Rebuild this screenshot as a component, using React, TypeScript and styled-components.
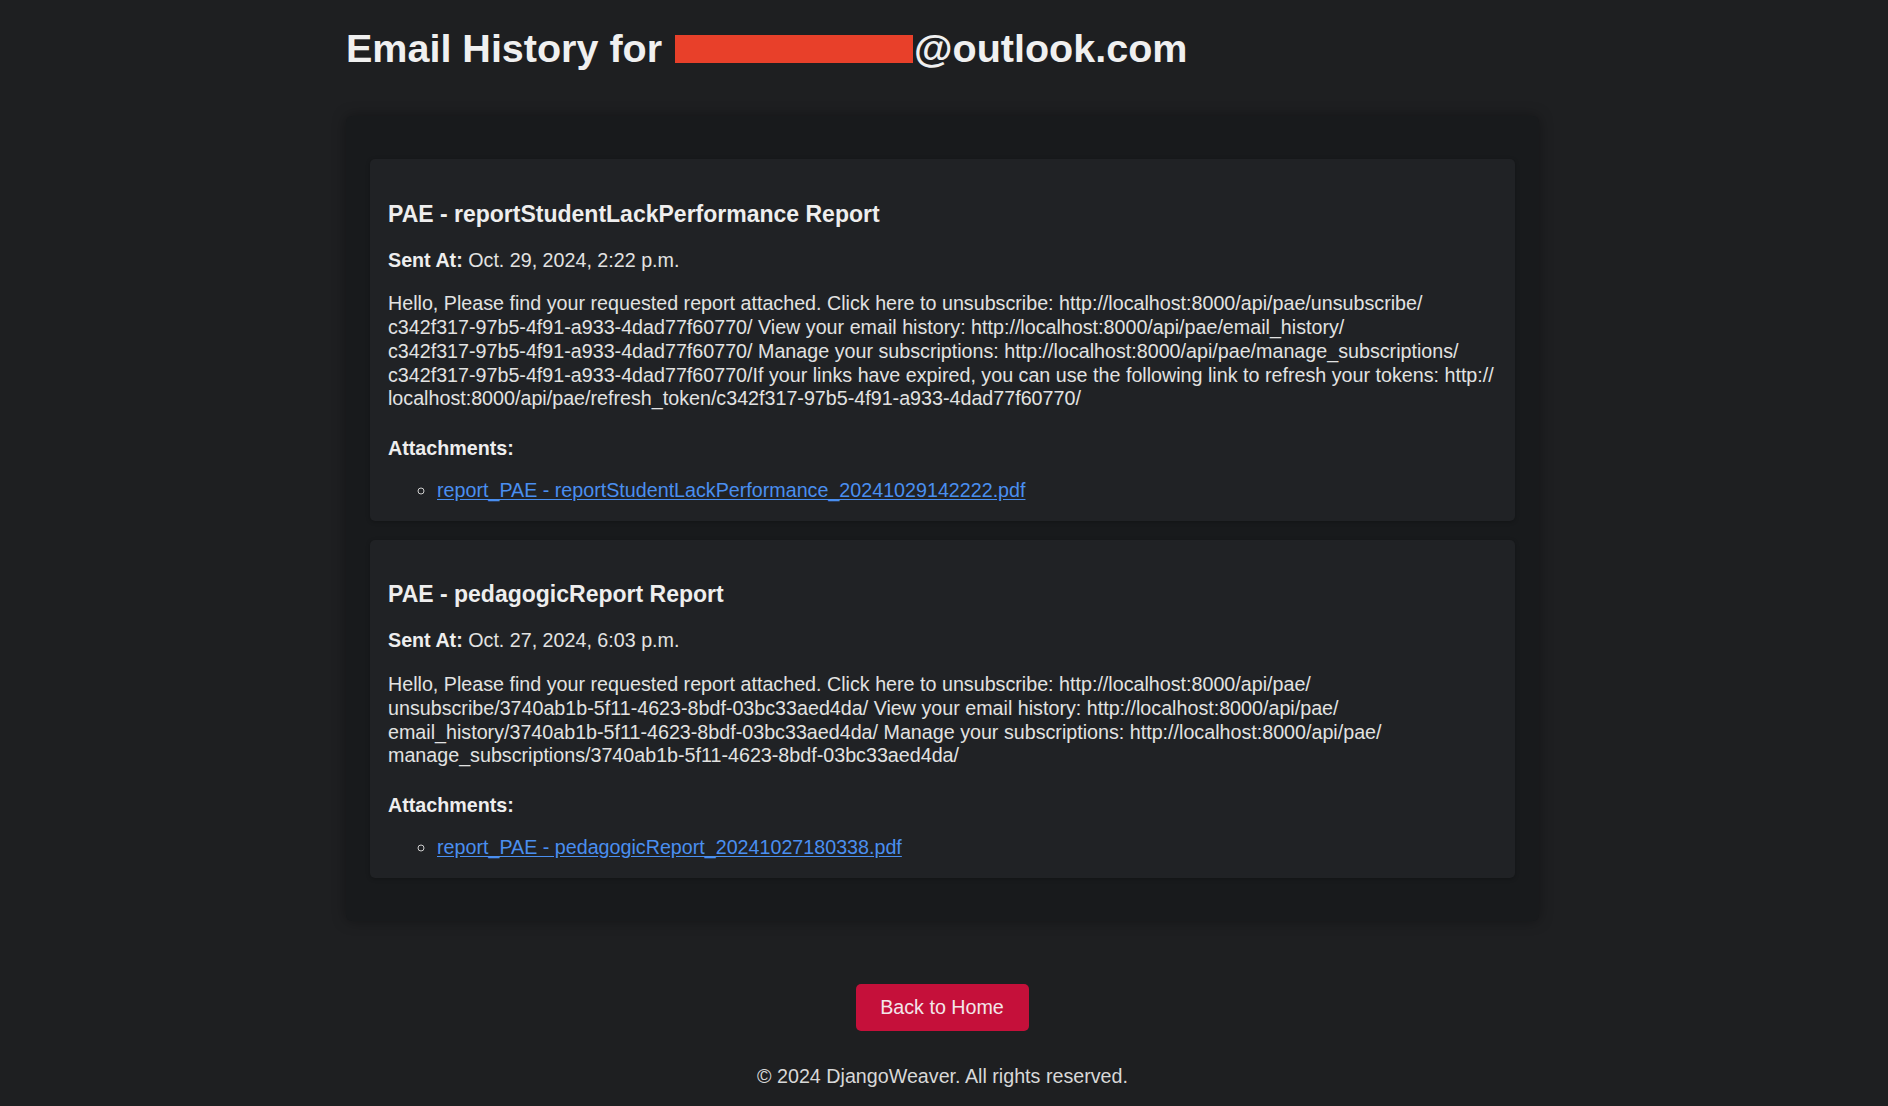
import React from "react";
import styled, { createGlobalStyle } from "styled-components";

const GlobalStyle = createGlobalStyle`
  html, body {
    margin: 0;
    padding: 0;
    background: #1e1f21;
  }
  body {
    font-family: "Liberation Sans", Arial, Helvetica, sans-serif;
    color: #e4e4e4;
    font-size: 19.7px;
    line-height: 24px;
  }
`;

const Main = styled.main`
  width: 1193px;
  margin: 0 auto;
  padding: 22px 3px 0 0;
`;

const Title = styled.h1`
  margin: 0 0 42px;
  font-size: 39.5px;
  line-height: 52px;
  font-weight: 700;
  color: #f0f0f0;
  display: flex;
  align-items: center;
  white-space: nowrap;
`;

const Redacted = styled.span`
  display: inline-block;
  width: 238px;
  height: 28px;
  margin: 0 1px -2px 13px;
  background: #e8402a;
`;

const Panel = styled.section`
  background: #181a1c;
  border-radius: 6px;
  padding: 24px 24px;
  box-shadow: 0 0 14px rgba(0, 0, 0, 0.35);
`;

const Card = styled.article`
  background: #202225;
  border-radius: 5px;
  padding: 18px 18px 18.5px;
  margin: 19px 0;
  box-shadow: 0 1px 4px rgba(0, 0, 0, 0.25);
`;

const Subject = styled.h3`
  margin: 23.5px 0 0;
  font-size: 23px;
  line-height: 26px;
  font-weight: 700;
  color: #eeeeee;
`;

const Para = styled.p<{ $top: number }>`
  margin: ${(p) => p.$top}px 0 0;
  color: #e2e2e2;
  font-size: 19.7px;
  line-height: 23.8px;
  word-wrap: break-word;
`;

const Token = styled.span`
  white-space: nowrap;
`;

const Label = styled.strong`
  font-weight: 700;
  color: #eeeeee;
`;

const AttachHeading = styled.h4`
  margin: 24.5px 0 0;
  font-size: 19.7px;
  line-height: 24px;
  font-weight: 700;
  color: #eeeeee;
`;

const AttachList = styled.ul`
  margin: 18.5px 0 0;
  padding-left: 49px;
  list-style-type: circle;
  color: #cfcfcf;
`;

const AttachItem = styled.li`
  font-size: 19.7px;
  line-height: 24px;
`;

const FileLink = styled.a`
  color: #4a8ff0;
  text-decoration: underline;
  text-underline-offset: 2px;
`;

const Actions = styled.div`
  display: flex;
  flex-direction: column;
  align-items: center;
  margin-top: 63px;
`;

const HomeButton = styled.a`
  display: inline-flex;
  align-items: center;
  justify-content: center;
  width: 173px;
  height: 47px;
  box-sizing: border-box;
  background: #c5103a;
  color: #f3e6ea;
  border-radius: 5px;
  font-size: 19.7px;
  text-decoration: none;
  margin-left: -1px;
`;

const Footer = styled.footer`
  margin-top: 33px;
  text-align: center;
  color: #d8d8d8;
  font-size: 19.7px;
  line-height: 24px;
`;

type Email = {
  subject: string;
  sent: string;
  body: string;
  file: string;
};

const emails: Email[] = [
  {
    subject: "PAE - reportStudentLackPerformance Report",
    sent: "Oct. 29, 2024, 2:22 p.m.",
    body:
      "Hello, Please find your requested report attached. Click here to unsubscribe: http://localhost:8000/api/pae/unsubscribe/ c342f317-97b5-4f91-a933-4dad77f60770/ View your email history: http://localhost:8000/api/pae/email_history/ c342f317-97b5-4f91-a933-4dad77f60770/ Manage your subscriptions: http://localhost:8000/api/pae/manage_subscriptions/ c342f317-97b5-4f91-a933-4dad77f60770/If your links have expired, you can use the following link to refresh your tokens: http:// localhost:8000/api/pae/refresh_token/c342f317-97b5-4f91-a933-4dad77f60770/",
    file: "report_PAE - reportStudentLackPerformance_20241029142222.pdf",
  },
  {
    subject: "PAE - pedagogicReport Report",
    sent: "Oct. 27, 2024, 6:03 p.m.",
    body:
      "Hello, Please find your requested report attached. Click here to unsubscribe: http://localhost:8000/api/pae/ unsubscribe/3740ab1b-5f11-4623-8bdf-03bc33aed4da/ View your email history: http://localhost:8000/api/pae/ email_history/3740ab1b-5f11-4623-8bdf-03bc33aed4da/ Manage your subscriptions: http://localhost:8000/api/pae/ manage_subscriptions/3740ab1b-5f11-4623-8bdf-03bc33aed4da/",
    file: "report_PAE - pedagogicReport_20241027180338.pdf",
  },
];

function BodyText({ text }: { text: string }) {
  const words = text.split(" ");
  return (
    <>
      {words.map((w, i) => (
        <React.Fragment key={i}>
          {i > 0 ? " " : null}
          {w.includes("-") ? <Token>{w}</Token> : w}
        </React.Fragment>
      ))}
    </>
  );
}

export default function App() {
  return (
    <>
      <GlobalStyle />
      <Main>
        <Title>
          Email History for
          <Redacted />
          @outlook.com
        </Title>
        <Panel>
          {emails.map((e) => (
            <Card key={e.file}>
              <Subject>{e.subject}</Subject>
              <Para $top={22}>
                <Label>Sent At:</Label> {e.sent}
              </Para>
              <Para $top={20}>
                <BodyText text={e.body} />
              </Para>
              <AttachHeading>Attachments:</AttachHeading>
              <AttachList>
                <AttachItem>
                  <FileLink href="#">{e.file}</FileLink>
                </AttachItem>
              </AttachList>
            </Card>
          ))}
        </Panel>
        <Actions>
          <HomeButton href="#">Back to Home</HomeButton>
        </Actions>
        <Footer>© 2024 DjangoWeaver. All rights reserved.</Footer>
      </Main>
    </>
  );
}
